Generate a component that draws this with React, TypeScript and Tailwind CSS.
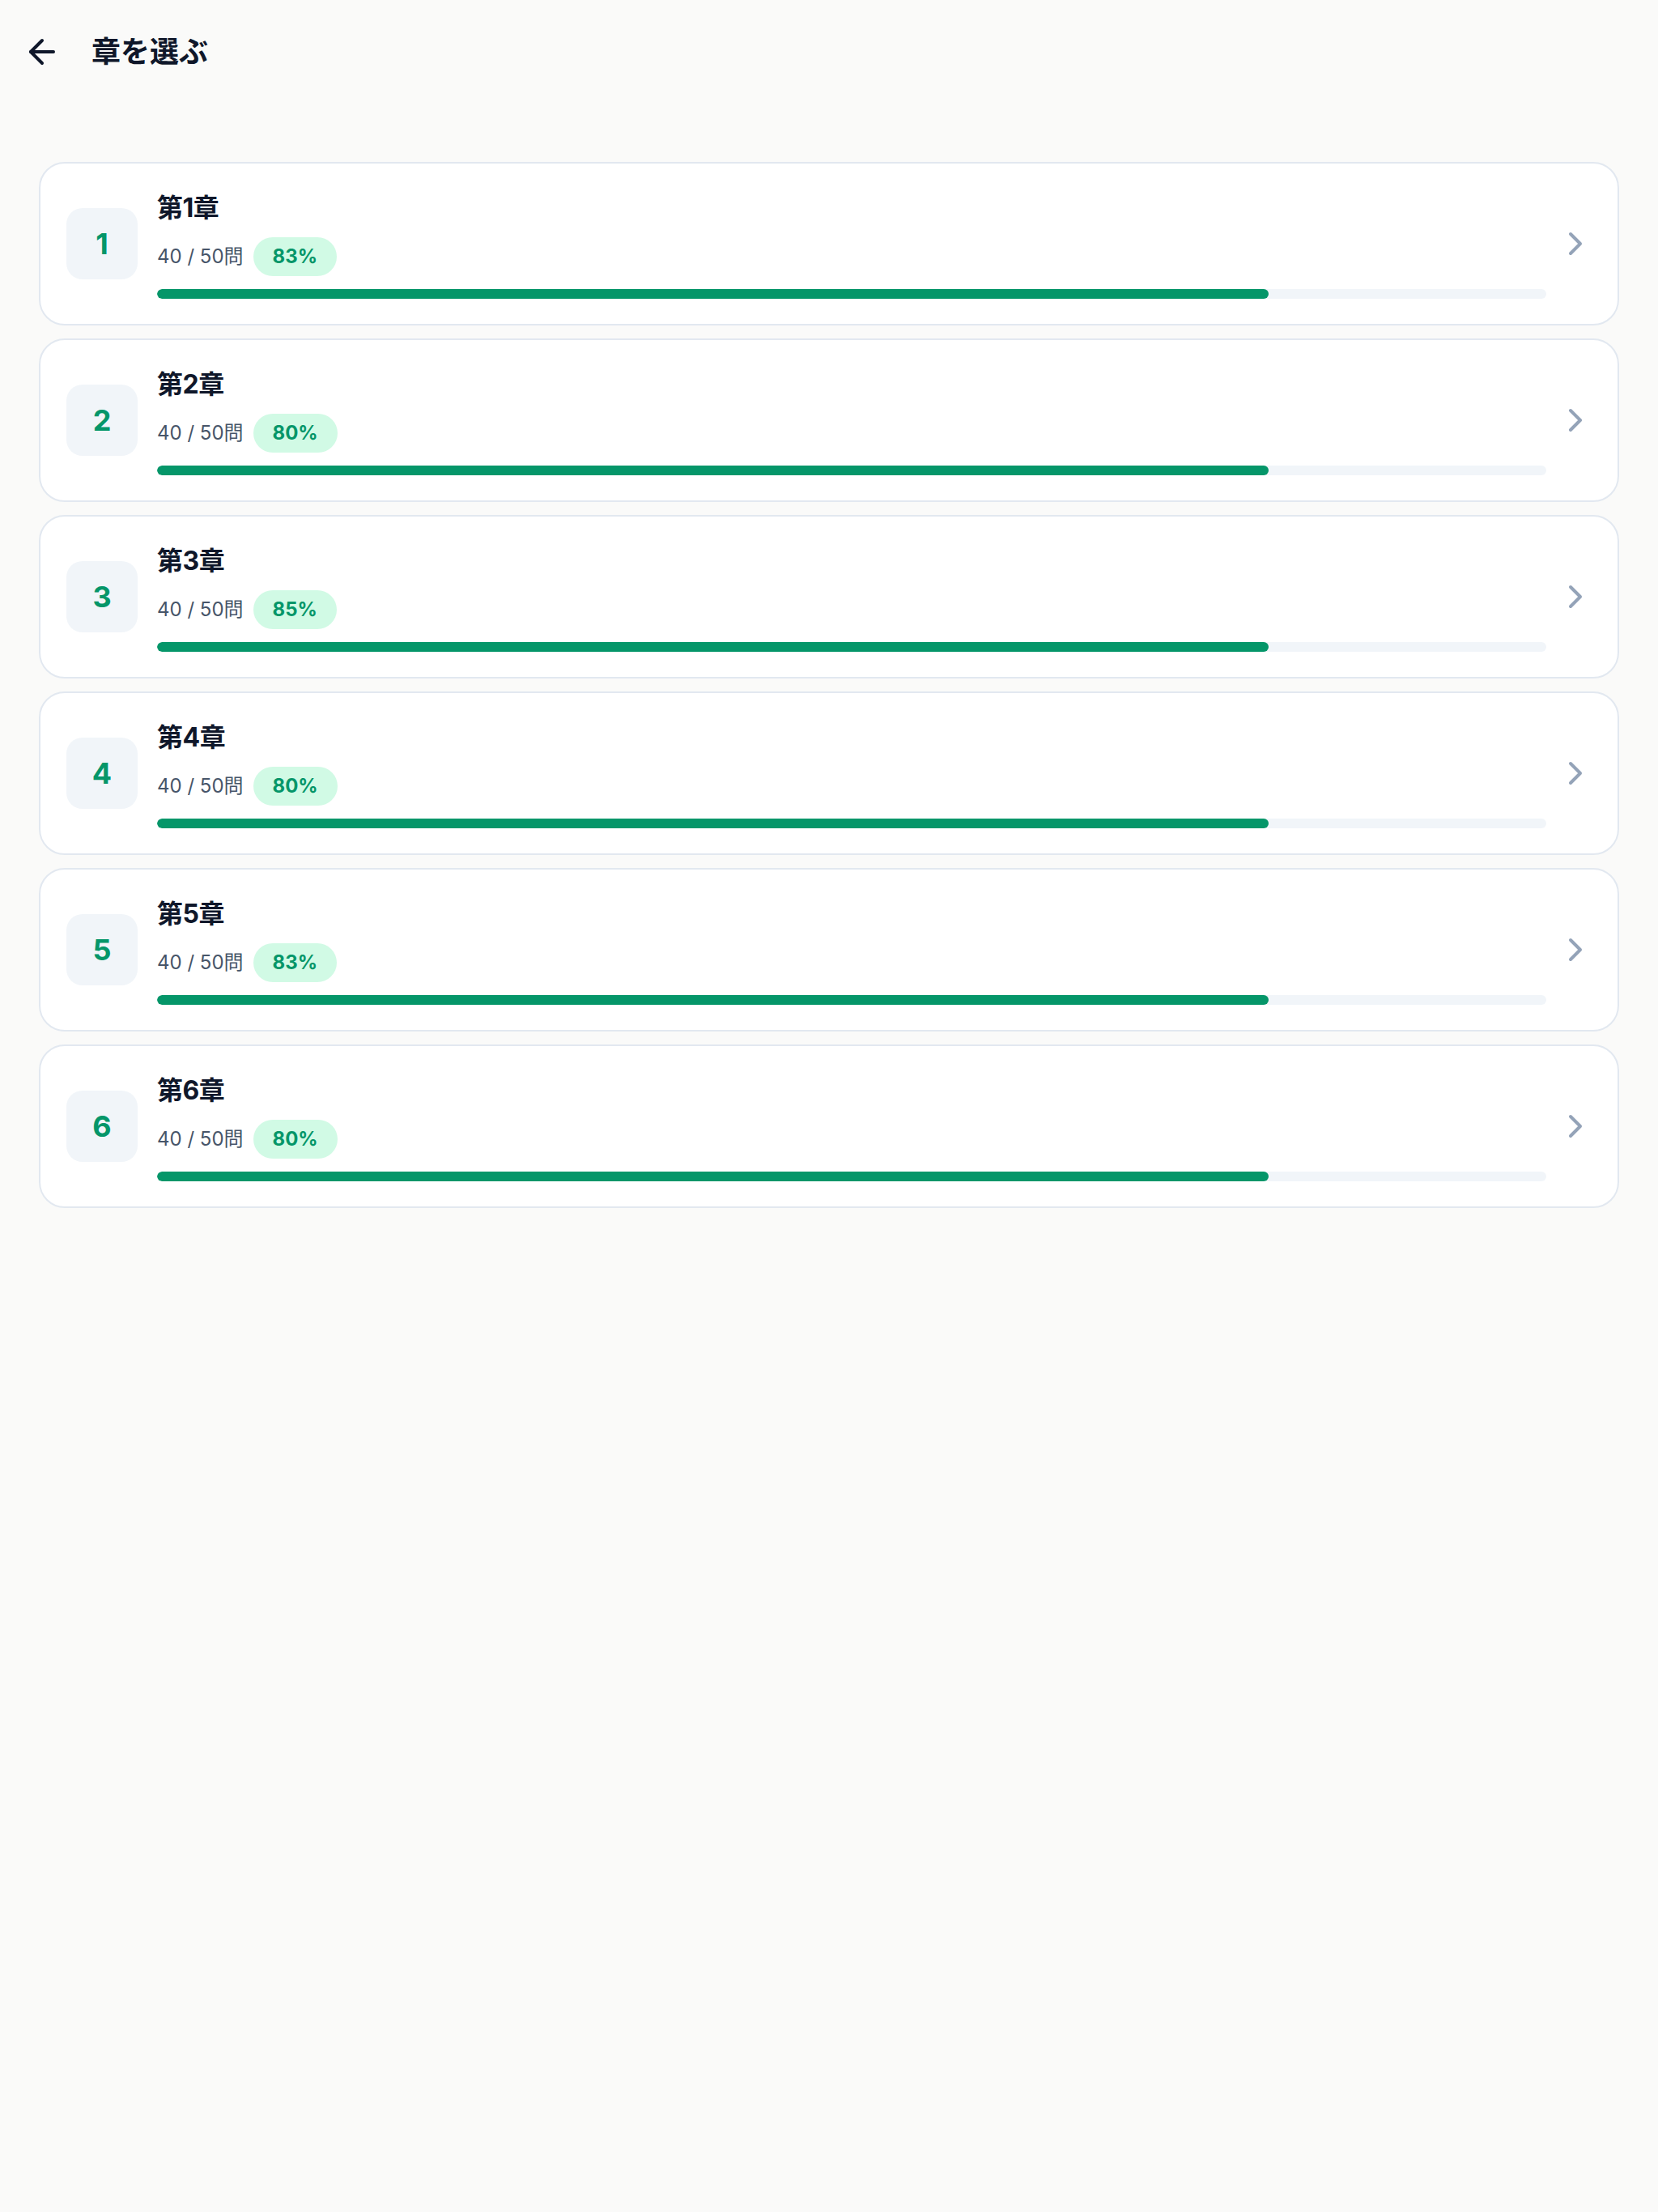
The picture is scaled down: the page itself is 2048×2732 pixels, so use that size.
import React from "react";
import { ArrowLeft, ChevronRight } from "lucide-react";

interface Chapter {
  id: number;
  title: string;
  answered: number;
  total: number;
  accuracy: number;
}

const chapters: Chapter[] = [
  { id: 1, title: "第1章", answered: 40, total: 50, accuracy: 83 },
  { id: 2, title: "第2章", answered: 40, total: 50, accuracy: 80 },
  { id: 3, title: "第3章", answered: 40, total: 50, accuracy: 85 },
  { id: 4, title: "第4章", answered: 40, total: 50, accuracy: 80 },
  { id: 5, title: "第5章", answered: 40, total: 50, accuracy: 83 },
  { id: 6, title: "第6章", answered: 40, total: 50, accuracy: 80 },
];

const ChapterCard = ({ chapter }: { chapter: Chapter }) => {
  const progress = (chapter.answered / chapter.total) * 100;

  return (
    <button className="w-full h-[202px] flex items-center bg-white border-2 border-[#e2e8f0] rounded-[32px] pl-[32px] pr-[28px] text-left">
      <div className="w-[88px] h-[88px] shrink-0 rounded-[20px] bg-[#f1f5f9] flex items-center justify-center">
        <span className="text-[36px] font-bold text-[#059669] leading-none">
          {chapter.id}
        </span>
      </div>

      <div className="flex-1 flex flex-col ml-[24px]">
        <p className="text-[32px] leading-[48px] font-bold text-[#0f172a] tracking-[-0.5px]">
          {chapter.title}
        </p>
        <div className="flex items-center gap-[12px] mt-[12px] h-[48px]">
          <span className="text-[24px] text-[#475569]">
            {chapter.answered} / {chapter.total}問
          </span>
          <span className="h-[48px] px-[24px] rounded-full bg-[#d1fae5] text-[#059669] text-[24px] font-bold flex items-center">
            {chapter.accuracy}%
          </span>
        </div>
        <div className="mt-[16px] h-[12px] w-full rounded-full bg-[#f1f5f9] overflow-hidden">
          <div
            className="h-full rounded-full bg-[#059669]"
            style={{ width: `${progress}%` }}
          />
        </div>
      </div>

      <ChevronRight
        className="ml-[12px] shrink-0 text-[#94a3b8]"
        size={48}
        strokeWidth={2}
      />
    </button>
  );
};

export default function App() {
  return (
    <div
      className="min-h-screen w-full bg-[#fafaf9]"
      style={{ fontFamily: 'Inter, "Noto Sans CJK JP", sans-serif' }}
    >
      <header className="h-[128px] flex items-center px-[28px]">
        <button className="w-[48px] h-[48px] flex items-center justify-center text-[#0f172a]">
          <ArrowLeft size={48} strokeWidth={2} />
        </button>
        <h1 className="ml-[37px] text-[36px] font-bold text-[#0f172a]">
          章を選ぶ
        </h1>
      </header>

      <main className="flex flex-col gap-[16px] px-[48px] pt-[72px]">
        {chapters.map((chapter) => (
          <ChapterCard key={chapter.id} chapter={chapter} />
        ))}
      </main>
    </div>
  );
}
